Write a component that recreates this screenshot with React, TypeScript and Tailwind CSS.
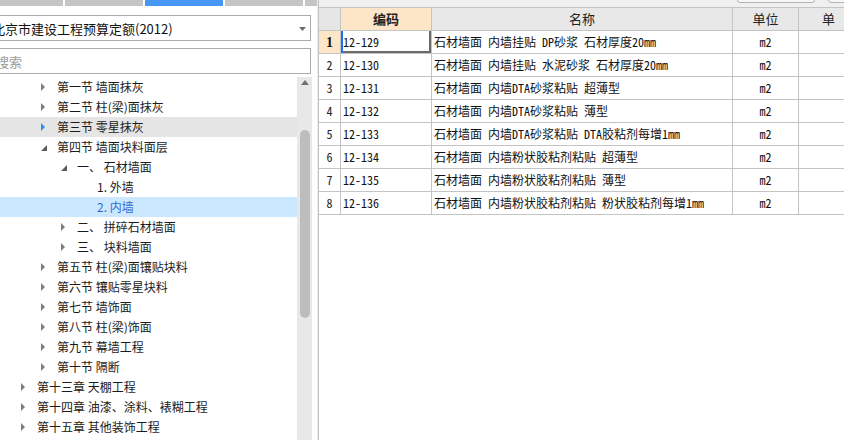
import React from "react";

type Node = { l: number; t: string; a?: "r" | "d"; hover?: boolean; sel?: boolean };

const tree: Node[] = [
  { l: 1, t: "第一节 墙面抹灰", a: "r" },
  { l: 1, t: "第二节 柱(梁)面抹灰", a: "r" },
  { l: 1, t: "第三节 零星抹灰", a: "r", hover: true },
  { l: 1, t: "第四节 墙面块料面层", a: "d" },
  { l: 2, t: "一、 石材墙面", a: "d" },
  { l: 3, t: "1. 外墙" },
  { l: 3, t: "2. 内墙", sel: true },
  { l: 2, t: "二、 拼碎石材墙面", a: "r" },
  { l: 2, t: "三、 块料墙面", a: "r" },
  { l: 1, t: "第五节 柱(梁)面镶贴块料", a: "r" },
  { l: 1, t: "第六节 镶贴零星块料", a: "r" },
  { l: 1, t: "第七节 墙饰面", a: "r" },
  { l: 1, t: "第八节 柱(梁)饰面", a: "r" },
  { l: 1, t: "第九节 幕墙工程", a: "r" },
  { l: 1, t: "第十节 隔断", a: "r" },
  { l: 0, t: "第十三章 天棚工程", a: "r" },
  { l: 0, t: "第十四章 油漆、涂料、裱糊工程", a: "r" },
  { l: 0, t: "第十五章 其他装饰工程", a: "r" },
];

const pad: Record<number, string> = {
  0: "pl-[20px]",
  1: "pl-[40px]",
  2: "pl-[60px]",
  3: "pl-[80px]",
};

const rows = [
  ["12-129", "石材墙面 内墙挂贴 DP砂浆 石材厚度20mm"],
  ["12-130", "石材墙面 内墙挂贴 水泥砂浆 石材厚度20mm"],
  ["12-131", "石材墙面 内墙DTA砂浆粘贴 超薄型"],
  ["12-132", "石材墙面 内墙DTA砂浆粘贴 薄型"],
  ["12-133", "石材墙面 内墙DTA砂浆粘贴 DTA胶粘剂每增1mm"],
  ["12-134", "石材墙面 内墙粉状胶粘剂粘贴 超薄型"],
  ["12-135", "石材墙面 内墙粉状胶粘剂粘贴 薄型"],
  ["12-136", "石材墙面 内墙粉状胶粘剂粘贴 粉状胶粘剂每增1mm"],
];

function Arrow({ a, hover }: { a?: "r" | "d"; hover?: boolean }) {
  if (a === "r")
    return (
      <svg width="4" height="8" viewBox="0 0 4 8" className="ml-[1px]">
        <polygon points="0,0 4,4 0,8" fill={hover ? "#2b8ff0" : "#7c7c7c"} />
      </svg>
    );
  if (a === "d")
    return (
      <svg width="6" height="6" viewBox="0 0 6 6" className="ml-[1px] mt-[1px]">
        <polygon points="6,0 6,6 0,6" fill="#5c5c5c" />
      </svg>
    );
  return null;
}

const mono = "font-['Noto_Sans_Mono_CJK_SC','Noto_Sans_CJK_SC',monospace]";

export default function App() {
  return (
    <div className="w-[844px] h-[440px] overflow-hidden flex bg-white font-['Noto_Sans_CJK_SC','Noto_Sans',sans-serif] text-[#1b1b1b]">
      {/* Left panel */}
      <div className="w-[317px] shrink-0 flex flex-col bg-white">
        <div className="h-[6px] flex gap-[2px] shrink-0">
          <div className="w-[63px] bg-[#c5c5c5]" />
          <div className="w-[78px] bg-[#c5c5c5]" />
          <div className="w-[78px] bg-[#4798f5]" />
          <div className="w-[78px] bg-[#c5c5c5]" />
          <div className="flex-1 bg-[#c5c5c5]" />
        </div>
        <div className="mt-[9px] ml-[-20px] mr-[6px] h-[26px] border border-[#ababab] flex items-center pl-[11px] pr-[4px] shrink-0">
          <span className="flex-1 text-[13px] leading-none text-[#111] whitespace-nowrap">北京市建设工程预算定额(2012)</span>
          <svg width="7" height="4" viewBox="0 0 7 4" className="mt-[1px]">
            <polygon points="0,0 7,0 3.5,4" fill="#6d6d6d" />
          </svg>
        </div>
        <div className="mt-[7px] ml-[-20px] mr-[6px] h-[26px] border border-[#ababab] flex items-center pl-[15px] shrink-0">
          <span className="text-[13px] leading-none text-[#9a9a9a]">搜索</span>
        </div>
        <div className="mt-[3px] flex flex-1 min-h-0">
          <div className="w-[297px] flex flex-col">
            {tree.map((n, i) => (
              <div
                key={i}
                className={`h-[20px] shrink-0 flex items-center ${pad[n.l]} ${
                  n.hover ? "bg-[#e5e5e5]" : n.sel ? "bg-[#cce8ff]" : ""
                }`}
              >
                <div className="w-[16px] shrink-0 flex items-center">
                  <Arrow a={n.a} hover={n.hover} />
                </div>
                <span
                  className={`ml-[1px] text-[12px] leading-none whitespace-nowrap ${
                    n.sel ? "text-[#2f6bd6]" : "text-[#1b1b1b]"
                  }`}
                >
                  {n.t}
                </span>
              </div>
            ))}
          </div>
          <div className="w-[15px] bg-[#e8e8e8] flex flex-col items-center shrink-0">
            <svg width="8" height="5" viewBox="0 0 8 5" className="mt-[3px]">
              <polygon points="0,5 8,5 4,0" fill="#707070" />
            </svg>
            <div className="mt-[45px] w-[10px] h-[188px] rounded-full bg-[#bdbdbd]" />
          </div>
        </div>
      </div>

      {/* Divider */}
      <div className="w-[1px] bg-[#ececec] shrink-0" />
      <div className="w-[1px] bg-[#c2c2c2] shrink-0" />

      {/* Right panel */}
      <div className="flex-1 flex flex-col min-w-0 bg-white">
        <div className="h-[7px] bg-[#f0f0f0] flex items-end overflow-hidden shrink-0">
          <div className="ml-[418px] w-[78px] h-[12px] mb-[4px] rounded-b-[3px] border border-[#b3b3b3] bg-[#f7f7f7] shrink-0" />
          <div className="ml-[13px] w-[40px] h-[12px] mb-[4px] rounded-b-[3px] border border-[#b3b3b3] bg-[#f7f7f7] shrink-0" />
        </div>
        <div className="w-[600px] border-t border-[#c4c4c4]">
          {/* Header */}
          <div className="flex h-[23px] bg-[#e8e8e8]">
            <div className="w-[22px] border-r border-b border-[#c4c4c4] bg-[#e6e6e6]" />
            <div className="w-[91px] border-r border-b border-[#c4c4c4] bg-[#fde5c8] flex items-center justify-center text-[13px] font-bold text-[#222]">
              编码
            </div>
            <div className="w-[301px] border-r border-b border-[#c4c4c4] flex items-center justify-center text-[13px] text-[#222]">
              名称
            </div>
            <div className="w-[66px] border-r border-b border-[#c4c4c4] flex items-center justify-center text-[13px] text-[#222]">
              单位
            </div>
            <div className="w-[60px] border-r border-b border-[#c4c4c4] flex items-center justify-center text-[13px] text-[#222]">
              单
            </div>
          </div>
          {rows.map((r, i) => (
            <div key={i} className="flex h-[23px]">
              <div
                className={`w-[22px] border-r border-b border-[#c4c4c4] flex items-center justify-center ${
                  i === 0
                    ? "bg-[#fde5c8] font-['Liberation_Serif',serif] font-bold text-[14px] text-[#111]"
                    : `bg-white ${mono} text-[12px] text-[#222]`
                }`}
              >
                {i + 1}
              </div>
              <div
                className={`w-[91px] border-r border-b border-[#c4c4c4] flex items-center pl-[2px] ${mono} text-[12px] text-[#111] ${
                  i === 0 ? "shadow-[inset_2px_0_0_#1a73e8,inset_-2px_-2px_0_#6a6a6a]" : ""
                }`}
              >
                {r[0]}
              </div>
              <div className={`w-[301px] border-r border-b border-[#c4c4c4] flex items-center pl-[2px] ${mono} text-[12px] text-[#111] whitespace-nowrap`}>
                {r[1]}
              </div>
              <div className={`w-[66px] border-r border-b border-[#c4c4c4] flex items-center justify-center ${mono} text-[12px] text-[#111]`}>
                m2
              </div>
              <div className="w-[60px] border-r border-b border-[#c4c4c4]" />
            </div>
          ))}
        </div>
      </div>
    </div>
  );
}
